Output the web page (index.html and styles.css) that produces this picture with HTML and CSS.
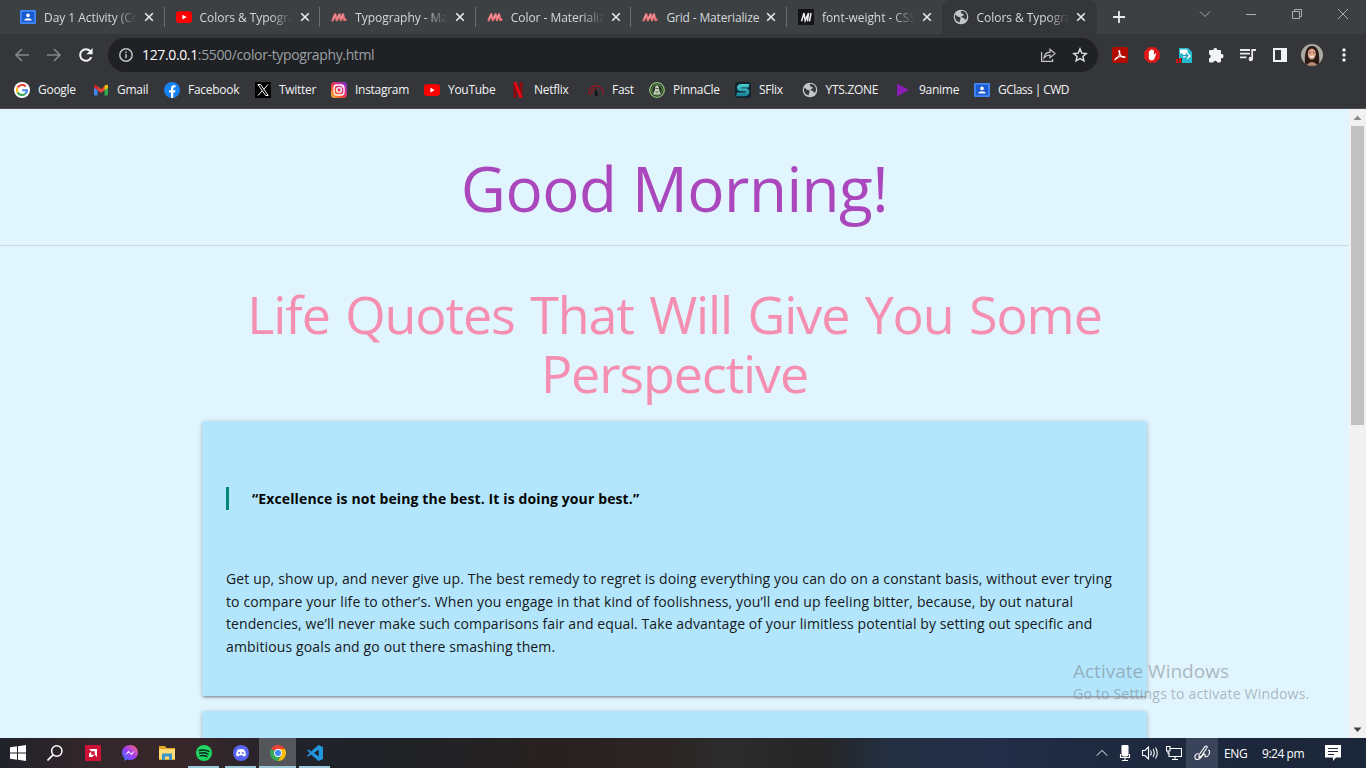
FILE: index.html
```html
<!DOCTYPE html>
<html lang="en">
<head>
<meta charset="utf-8">
<title>Colors &amp; Typography</title>
<link rel="stylesheet" href="styles.css">
</head>
<body>
<svg width="0" height="0" class="defs">
  <defs>
    <linearGradient id="ig" x1="0" y1="1" x2="1" y2="0"><stop offset="0" stop-color="#fdc735"/><stop offset=".35" stop-color="#f5502f"/><stop offset=".65" stop-color="#d42a8c"/><stop offset="1" stop-color="#6a35d8"/></linearGradient>
    <linearGradient id="ms" x1="0" y1="1" x2="1" y2="0"><stop offset="0" stop-color="#2b7cff"/><stop offset=".5" stop-color="#a13cf5"/><stop offset="1" stop-color="#ff6a68"/></linearGradient>
    <linearGradient id="sf" x1="0" y1="0" x2="0" y2="1"><stop offset="0" stop-color="#45cfd0"/><stop offset="1" stop-color="#1b7f95"/></linearGradient>
    <symbol id="x" viewBox="0 0 10 10"><path d="M1.2 1.2l7.6 7.6M8.8 1.2L1.2 8.8" stroke="#e8eaed" stroke-width="1.6" fill="none"/></symbol>
    <symbol id="classroom" viewBox="0 0 16 16"><rect y="1" width="16" height="14" rx="1" fill="#4285f4"/><rect x="1.8" y="2.8" width="12.4" height="10.4" fill="#1a5bd0"/><circle cx="8" cy="6.4" r="1.8" fill="#fff"/><path d="M4.3 11.4c0-3 7.4-3 7.4 0z" fill="#fff"/></symbol>
    <symbol id="youtube" viewBox="0 0 16 16"><rect y="2.3" width="16" height="11.6" rx="3" fill="#f00"/><path d="M6.4 5.700v4.700L10.600 8z" fill="#fff"/></symbol>
    <symbol id="materialize" viewBox="0 0 16 16"><path d="M1.600 11.400L4.300 5.300 5.800 11.200 8.600 5.300 9.900 11.200 12 5.300 13.400 11 14.600 10.600" fill="none" stroke="#e8747a" stroke-width="2.300" stroke-linecap="round" stroke-linejoin="round"/><path d="M2.200 9.800l1.900-4.300M6.500 9.600l1.900-4M10.400 9.400l1.500-3.800" stroke="#f7b0b3" stroke-width=".9" fill="none"/></symbol>
    <symbol id="globe" viewBox="0 0 16 16"><circle cx="8" cy="8" r="7.300" fill="#c3c6ca"/><path d="M2.300 5.600c1.400.6 2.100 2.400 3.900 2.500 1.100.1 1.500.9 1.300 1.900-.2.900-.9 1.300-.7 3.500C4 13 2 10.700 1.900 8zM7.300 2.100c1.500.5.3 1.600 1.100 2.400.7.600 2-.2 2.300.9.200 1-.9 1.500-1.800 1.700-.8.300-.4 1.200.5 1.300 1.300 0 2.400 1 2.600 2.300l1.500-.8c1-2.300.5-5-1.300-6.600-1.300-1.100-3-1.600-4.900-1.200z" fill="#36373a"/></symbol>
  </defs>
</svg>

<header class="tabs">
  <div class="tab"><svg class="fav"><use href="#classroom"/></svg><span class="title">Day 1 Activity (Color</span><svg class="close"><use href="#x"/></svg></div>
  <div class="tab"><svg class="fav"><use href="#youtube"/></svg><span class="title">Colors &amp; Typography</span><svg class="close"><use href="#x"/></svg></div>
  <div class="tab"><svg class="fav"><use href="#materialize"/></svg><span class="title">Typography - Materialize</span><svg class="close"><use href="#x"/></svg></div>
  <div class="tab"><svg class="fav"><use href="#materialize"/></svg><span class="title">Color - Materialize</span><svg class="close"><use href="#x"/></svg></div>
  <div class="tab"><svg class="fav"><use href="#materialize"/></svg><span class="title full">Grid - Materialize</span><svg class="close"><use href="#x"/></svg></div>
  <div class="tab last"><svg class="fav" viewBox="0 0 16 16"><rect width="16" height="16" fill="#15141a"/><path d="M3.500 12.300L6 4l1.200 7.500L10.500 4 9.500 12.300M11.500 12.300L13 4" fill="none" stroke="#eee" stroke-width="1.500"/></svg><span class="title">font-weight - CSS: Casc</span><svg class="close"><use href="#x"/></svg></div>
  <div class="tab active"><svg class="fav"><use href="#globe"/></svg><span class="title">Colors &amp; Typography</span><svg class="close"><use href="#x"/></svg></div>
  <svg class="plus" viewBox="0 0 12 12"><path d="M6 0v12M0 6h12" stroke="#e8eaed" stroke-width="1.800"/></svg>
  <div class="window-buttons">
    <svg viewBox="0 0 12 12"><path d="M1 3.500l5 5 5-5" /></svg>
    <svg viewBox="0 0 12 12"><path d="M1 6.500h10"/></svg>
    <svg viewBox="0 0 12 12"><path d="M1.500 3.500h7v7h-7zM3.500 3.500v-2h7v7h-2"/></svg>
    <svg viewBox="0 0 12 12"><path d="M1 1l10 10M11 1L1 11"/></svg>
  </div>
</header>

<nav class="toolbar">
  <svg class="nav" viewBox="0 0 16 16"><path d="M15 8H2M8 2L2 8l6 6" stroke="#84878a"/></svg>
  <svg class="nav" viewBox="0 0 16 16"><path d="M1 8h13M8 2l6 6-6 6" stroke="#84878a"/></svg>
  <svg class="nav" viewBox="0 0 16 16"><path d="M13.300 10.200A5.800 5.800 0 1 1 12.400 4.200" stroke="#f1f3f4" stroke-width="2"/><path d="M14.600 1v6.200H8.400z" fill="#f1f3f4"/></svg>
  <div class="omnibox">
    <svg width="16" height="16" viewBox="0 0 16 16" fill="none" stroke="#bdc1c6" stroke-width="1.500"><circle cx="8" cy="8" r="6.200"/><path d="M8 7v4.200M8 4.400v1.600"/></svg>
    <span class="url"><b>127.0.0.1</b>:5500/color-typography.html</span>
    <svg class="share" width="16" height="16" viewBox="0 0 16 16" fill="none" stroke="#c4c7c5" stroke-width="1.200"><path d="M1.600 5v9.400h11V12M4 11c.4-3.800 2.500-5.700 6-5.900V2.300L15 6.600l-5 4.200V8c-2.700 0-4.400.8-6 3z"/></svg>
    <svg width="16" height="16" viewBox="0 0 16 16" fill="none" stroke="#dfe1e5" stroke-width="1.400"><path d="M8 1.900l1.800 4.200 4.500.4-3.400 3 1 4.400L8 11.600l-3.900 2.300 1-4.400-3.400-3 4.500-.4z"/></svg>
  </div>
  <div class="extensions">
    <svg viewBox="0 0 16 16"><rect width="16" height="16" rx="2" fill="#b30b00"/><path d="M3 12.500C6 11.500 8.500 7 7.700 4c-.8-1.500-1.200.5-.2 2.500 1.200 2.300 3.200 4 5 4 1.700-.4-.5-1.500-4-.8-2.500.3-5 1.500-5.500 2.800z" fill="none" stroke="#fff" stroke-width="1.100"/></svg>
    <svg viewBox="0 0 16 16"><path d="M4.800.2h6.400l4.600 4.600v6.400l-4.600 4.600H4.800L.2 11.200V4.800z" fill="#e01818"/><path d="M4.800 8V4.600c0-.9 1.200-.9 1.200 0V3.500c0-1 1.300-1 1.300 0V2.900c0-1 1.300-1 1.300 0v.8c0-1 1.300-1 1.300 0V8.200l1-1.500c.6-.8 1.600-.3 1.200.6l-1.600 4c-.6 1.600-1.200 2-2.900 2-2 0-2.800-.9-2.800-2.800z" fill="#fff"/></svg>
    <svg viewBox="0 0 16 16"><path d="M3 1h9l4 4v11H6V11H3z" fill="#24b9cd"/><path d="M4 2.500h7.500v3L15 9l-4 3.500v-2H7v-4H4z" fill="#fff"/><path d="M6.500 8.700H12M9.800 6.500L12 8.700l-2.200 2.200" stroke="#14a0b8" stroke-width="1.200" fill="none"/><path d="M0 12h2v4H0zM3 11h2v5H3z" fill="#d11"/></svg>
    <svg viewBox="0 0 16 16"><path d="M1 4.300c0-.7.500-1.200 1.200-1.200h3.100a2 2 0 1 1 4 0h2.500c.7 0 1.200.5 1.200 1.200v2.800a2.100 2.100 0 1 1 0 4.100v3c0 .7-.5 1.200-1.200 1.200H9.300a2.100 2.100 0 0 0-4.100 0h-3c-.7 0-1.200-.5-1.200-1.200v-2.700a2.200 2.200 0 0 0 0-4.300z" fill="#f1f3f4"/></svg>
    <svg viewBox="0 0 16 16"><path d="M0 3h10M0 6.700h10M0 10.400h6.500M12.200 12V3H16" stroke="#e8eaed" stroke-width="1.800" fill="none"/><circle cx="10.800" cy="12" r="2.200" fill="#e8eaed"/></svg>
    <svg viewBox="0 0 16 16"><path d="M1 1h14v14H1zM3 3v10h6V3z" fill="#f1f3f4" fill-rule="evenodd"/></svg>
    <svg class="avatar" viewBox="0 0 22 22"><clipPath id="round"><circle cx="11" cy="11" r="11"/></clipPath><g clip-path="url(#round)"><rect width="22" height="22" fill="#a9aaa0"/><path d="M4 22C3 9 5 2 11 2s8 6 7 20z" fill="#2c1a17"/><ellipse cx="10.800" cy="10" rx="4" ry="5.600" fill="#dba387"/><path d="M8.300 11.800q2.500 3.400 5 0z" fill="#fff"/><path d="M8 8.700h1.800M12 8.700h1.800" stroke="#5d3b33" stroke-width=".8"/><path d="M5 22q6-8 12 0z" fill="#b98a78"/></g></svg>
    <svg class="dots" viewBox="0 0 4 16" fill="#f1f3f4"><circle cx="2" cy="3" r="1.700"/><circle cx="2" cy="8" r="1.700"/><circle cx="2" cy="13" r="1.700"/></svg>
  </div>
</nav>

<nav class="bookmarks">
  <a><svg viewBox="0 0 16 16"><circle cx="8" cy="8" r="8" fill="#fff"/><g fill="none" stroke-width="2.100"><path d="M11.700 4.500A5 5 0 0 0 3.600 5.600" stroke="#ea4335"/><path d="M3.600 5.600a5 5 0 0 0 0 4.800" stroke="#fbbc05"/><path d="M3.600 10.400a5 5 0 0 0 7.700 1.300" stroke="#34a853"/><path d="M11.300 11.700A5 5 0 0 0 13 8.200H8.200" stroke="#4285f4"/></g></svg><span>Google</span></a>
  <a><svg viewBox="0 0 16 16"><path d="M1 3.500l3.500 2.400V13.500H2a1 1 0 0 1-1-1z" fill="#4285f4"/><path d="M15 3.500l-3.500 2.400V13.500H14a1 1 0 0 0 1-1z" fill="#34a853"/><path d="M4.500 4.200L8 7l3.500-2.800v4L8 11 4.500 8.200z" fill="#ea4335"/><path d="M1 4.500C1 2.500 2.800 2.200 4 3.300l.5.500v4.400L1 5.700z" fill="#c5221f"/><path d="M15 4.500c0-2-1.800-2.300-3-1.200l-.5.500v4.400L15 5.700z" fill="#fbbc04"/></svg><span>Gmail</span></a>
  <a><svg viewBox="0 0 16 16"><circle cx="8" cy="8" r="8" fill="#1582ef"/><path d="M7 16v-5.500H5V8.200h2V6.500C7 4.300 8.300 3.200 10 3.200l1.600.1v2h-1c-1 0-1.300.5-1.300 1.300v1.600h2.200l-.4 2.300H9.300V16z" fill="#fff"/></svg><span>Facebook</span></a>
  <a><svg viewBox="0 0 16 16"><rect width="16" height="16" fill="#000"/><path d="M3 2.500h2.600l7.600 11h-2.600zM13 2.500L8.700 7.300M7.200 8.800L3 13.500" fill="none" stroke="#fff"/></svg><span>Twitter</span></a>
  <a><svg viewBox="0 0 16 16"><rect width="16" height="16" rx="3.500" fill="url(#ig)"/><g fill="none" stroke="#fff" stroke-width="1.300"><rect x="3" y="3" width="10" height="10" rx="3"/><circle cx="8" cy="8" r="2.400"/></g><circle cx="11" cy="5" r=".8" fill="#fff"/></svg><span>Instagram</span></a>
  <a><svg><use href="#youtube"/></svg><span>YouTube</span></a>
  <a><svg viewBox="0 0 16 16"><path d="M3.500 0h3v16h-3zM9.500 0h3v16h-3z" fill="#8f0a10"/><path d="M3.500 0h3l6 16h-3z" fill="#e50914"/></svg><span>Netflix</span></a>
  <a><svg viewBox="0 0 16 16"><path d="M1.300 12.500A7 7 0 1 1 14.800 12.500M4 12.500A4.300 4.300 0 0 1 9 6.700" fill="none" stroke="#a01622" stroke-width="1.200"/><path d="M7 5l2.400 6.200A1.500 1.500 0 1 1 7 12z" fill="#111"/></svg><span>Fast</span></a>
  <a><svg viewBox="0 0 16 16"><circle cx="8" cy="8" r="7.300" fill="#263523" stroke="#8fbf7c" stroke-width="1.300"/><circle cx="8" cy="8" r="5.300" fill="none" stroke="#61944f"/><path d="M4.500 12.500c0-3 1.500-3 1.500-6 0-4 4-4 4 0 0 3 1.500 3 1.500 6z" fill="#c5cfbe"/><path d="M6.500 6.500h3M6.500 10h3" stroke="#4d6343"/></svg><span>PinnaCle</span></a>
  <a><svg viewBox="0 0 16 16"><rect width="16" height="16" rx="3" fill="#10232f"/><path d="M14.500 2H6C.8 2 .5 9.300 6 9.300h4c1.500 0 1 1.200 0 1.200H2L1 14.200h9c5.500 0 6-7.900.5-7.900H7c-1 0-1-.8 0-.8h6.500z" fill="url(#sf)"/></svg><span>SFlix</span></a>
  <a><svg><use href="#globe"/></svg><span>YTS.ZONE</span></a>
  <a><svg viewBox="0 0 16 16"><path d="M2 1.500L14 8 2 14.500z" fill="#8b1fb5"/></svg><span>9anime</span></a>
  <a class="tight"><svg><use href="#classroom"/></svg><span>GClass | CWD</span></a>
</nav>

<div class="viewport">
  <main class="page">
    <h1>Good Morning!</h1>
    <hr>
    <div class="container">
      <h2>Life Quotes That Will Give You Some<br>Perspective</h2>
      <section class="card">
        <blockquote>“Excellence is not being the best. It is doing your best.”</blockquote>
        <p>Get up, show up, and never give up. The best remedy to regret is doing everything you can do on a constant basis, without ever trying<br>to compare your life to other’s. When you engage in that kind of foolishness, you’ll end up feeling bitter, because, by out natural<br><span class="tighter">tendencies, we’ll never make such comparisons fair and equal. Take advantage of your limitless potential by setting out specific and</span><br>ambitious goals and go out there smashing them.</p>
      </section>
      <section class="card"></section>
    </div>
  </main>
  <div class="scrollbar">
    <svg viewBox="0 0 17 17"><path d="M4.500 11h8L8.500 6.500z" fill="#8b8b8b"/></svg>
    <div class="thumb"></div>
    <svg viewBox="0 0 17 17"><path d="M4.500 6.500h8L8.500 11z" fill="#404040"/></svg>
  </div>
  <div class="activate"><div class="big">Activate Windows</div><div class="small">Go to Settings to activate Windows.</div></div>
</div>

<footer class="taskbar">
  <div class="app"><svg viewBox="0 0 16 16"><path d="M0 2.300l7-1v6.200H0zM8 1.200L16 0v7.500H8zM0 8.500h7v6.200l-7-1zM8 8.500h8V16l-8-1.200z" fill="#fff"/></svg></div>
  <div class="app"><svg viewBox="0 0 16 16"><circle cx="9.800" cy="6" r="5.200" fill="none" stroke="#fff" stroke-width="1.500"/><path d="M6 9.800L.4 15.500" stroke="#fff" stroke-width="1.700"/></svg></div>
  <div class="app"><svg viewBox="0 0 16 16"><rect width="16" height="16" fill="#cc1236"/><path d="M4 4h8v8L9.700 9.700V6.300H6.300zM4 8.700L6.200 6.500v3.300h3.300L7.300 12H4z" fill="#fff"/></svg></div>
  <div class="app"><svg viewBox="0 0 16 16"><path d="M8 0C3.400 0 0 3.300 0 7.600c0 2.400 1 4.300 2.500 5.600V16l2.600-1.400c.9.300 1.900.4 2.900.4 4.600 0 8-3.300 8-7.500S12.600 0 8 0z" fill="url(#ms)"/><path d="M3 10l3.500-4.200L9 8.500 13 5.700 9.500 10 7 7.600z" fill="#fff"/></svg></div>
  <div class="app"><svg viewBox="0 0 16 16"><path d="M0 1h6l1.500 2H16v12H0z" fill="#e5a626"/><path d="M0 4h16v10H0z" fill="#ffdc75"/><path d="M3 15V8.500h10V15h-3v-3.500H6V15z" fill="#3996ce"/></svg></div>
  <div class="app open"><svg viewBox="0 0 16 16"><circle cx="8" cy="8" r="8" fill="#1ed760"/><path d="M3.300 5.500q5-1.500 9.600.9M3.700 8.300q4.500-1.300 8.200.8M4.200 10.900q3.700-1 6.700.7" stroke="#122" stroke-width="1.500" stroke-linecap="round" fill="none"/></svg></div>
  <div class="app open"><svg viewBox="0 0 16 16"><circle cx="8" cy="8" r="8" fill="#5865f2"/><path d="M4.800 4.500q3.200-1.200 6.400 0 1.800 2.800 1.800 5.800-1.200 1-2.600 1.200l-.8-1.200H6.400l-.8 1.200Q4.200 11.300 3 10.300q0-3 1.800-5.800z" fill="#fff"/><circle cx="6.200" cy="8" r="1" fill="#5865f2"/><circle cx="9.800" cy="8" r="1" fill="#5865f2"/></svg></div>
  <div class="app open current"><svg viewBox="0 0 16 16"><path d="M8 8L1.070 4A8 8 0 0 1 14.930 4z" fill="#ea4335"/><path d="M1.070 4A8 8 0 0 0 8 16l3.500-6L8 8z" fill="#34a853"/><path d="M14.930 4A8 8 0 0 1 8 16l3.500-6L8 4z" fill="#fbbc05"/><circle cx="8" cy="8" r="3.900" fill="#fff"/><circle cx="8" cy="8" r="3" fill="#4285f4"/></svg></div>
  <div class="app open"><svg viewBox="0 0 16 16"><path d="M11.500 0L16 2v12l-4.500 2L4 9.500 1.500 11.500 0 10.700 3 8 0 5.300l1.500-.8L4 6.500zM11.700 4.500L7 8l4.700 3.500z" fill="#2496e0" fill-rule="evenodd"/></svg></div>
  <div class="tray">
    <svg class="chev" viewBox="0 0 16 16"><path d="M2 11l6-6 6 6"/></svg>
    <svg class="mic" viewBox="0 0 16 16"><rect x="5" y="0" width="6" height="11" rx="1.500" fill="#fff"/><path d="M3.500 9v3.500h9V9M8 12.500v3M5 15.500h6"/></svg>
    <svg class="vol" viewBox="0 0 16 16"><path d="M.5 5.500H3L6.500 2v12L3 10.500H.5zM8.500 5.500q1.500 2.500 0 5M11 4q2.500 4 0 8M13.500 2.500q3.500 5.500 0 11"/></svg>
    <svg class="net" viewBox="0 0 16 16"><path d="M4 3.500H15.500v8H3V7.500M6 14.500h6M9 11.500v3M.5 1.500h3.500V6H.5zM2 6v3"/></svg>
    <div class="pen"><svg viewBox="0 0 16 16"><path d="M5 10L11 1.500q2-1.300 2.300.5L7.500 11 5 12.500zM4.500 8.500q-5 1-3 5.500 3 1.500 5.500-1.500l2.500-3q2-1 1.500 1t2 1 2.500-4-1.500-2"/></svg></div>
    <span class="lang">ENG</span>
    <span class="time">9:24 pm</span>
    <svg class="note" viewBox="0 0 16 16"><path d="M0 0h16v12.500h-5L8 16V12.500H0z" fill="#fff" stroke="none"/><path d="M3 3.500h10M3 6.500h10M3 9.500h6" stroke="#202a3d"/></svg>
  </div>
</footer>
</body>
</html>
```
FILE: styles.css
```css
* { box-sizing: border-box; }
body {
  margin: 0;
  width: 1366px;
  height: 768px;
  overflow: hidden;
  display: flex;
  flex-direction: column;
  font-family: "Open Sans", "Noto Sans", sans-serif;
  background: #35363a;
}
svg { display: block; flex: none; }
.defs { position: absolute; }

/* tab strip */
.tabs { height: 34px; background: #3c4043; display: flex; padding-left: 9px; flex: none; }
.tab {
  width: 155.600px;
  height: 34px;
  display: flex;
  align-items: center;
  padding: 0 10px 0 11px;
  position: relative;
  flex: none;
}
.tab::after { content: ""; position: absolute; right: 0; top: 7px; width: 1px; height: 20px; background: #6b6f73; }
.tab.last::after, .tab.active::after { display: none; }
.fav { width: 16px; height: 16px; margin-right: 8px; }
.title {
  width: 95px;
  overflow: hidden;
  white-space: nowrap;
  font-size: 12px;
  letter-spacing: -0.050px;
  color: #d5d8dc;
  -webkit-mask-image: linear-gradient(90deg, #000 74%, transparent 98%);
}
.title.full { -webkit-mask-image: none; letter-spacing: -0.150px; }
.close { width: 10px; height: 10px; margin-left: 5px; }
.tab.active { background: #35363a; border-radius: 8px 8px 0 0; margin-left: -1px; }
.tab.active .close { margin-left: 4px; }
.plus { width: 12px; height: 12px; margin: 11px 0 0 16px; }
.window-buttons { margin-left: auto; display: flex; gap: 34px; padding: 8px 17px 0 0; }
.window-buttons svg { width: 12px; height: 12px; fill: none; stroke: #b5b8ba; stroke-width: .9; }

/* address bar */
.toolbar { height: 38px; display: flex; align-items: center; padding: 4px 0 0 14px; flex: none; }
.nav { width: 16px; height: 16px; fill: none; stroke-width: 1.600; margin-right: 16px; }
.omnibox {
  width: 990px;
  height: 34px;
  margin-left: -2px;
  border-radius: 17px;
  background: #202124;
  display: flex;
  align-items: center;
  padding: 0 10px;
  flex: none;
}
.url { font-size: 14px; color: #9aa0a6; margin-left: 8px; letter-spacing: -0.360px; white-space: nowrap; padding-bottom: 1px; }
.url b { font-weight: 400; color: #fff; }
.share { margin-left: auto; margin-right: 16px; }
.extensions { display: flex; align-items: center; gap: 16px; margin-left: 14px; }
.extensions svg { width: 16px; height: 16px; }
.extensions .avatar { width: 22px; height: 22px; margin: 0 -3px; }
.extensions .dots { width: 4px; margin-left: 6px; }

/* bookmarks */
.bookmarks {
  height: 37px;
  border-bottom: 1px solid #4b4d51;
  display: grid;
  grid-template-columns: 79px 71px 91px 76px 93px 86px 78px 61px 86px 66.500px 93.500px 79px 110px;
  padding-left: 14px;
  align-items: center;
  flex: none;
}
.bookmarks a { display: flex; align-items: center; gap: 8px; font-size: 12px; color: #f1f3f4; white-space: nowrap; letter-spacing: -0.280px; }
.bookmarks .tight { letter-spacing: -0.550px; }
.bookmarks span { padding-bottom: 1px; }
.bookmarks svg { width: 16px; height: 16px; }

/* page */
.viewport { height: 629px; display: flex; position: relative; overflow: hidden; flex: none; }
.page { width: 1349px; background: #e1f5fe; font-size: 15px; line-height: 22.500px; overflow: hidden; }
h1, h2 { font-weight: 400; text-align: center; white-space: nowrap; }
h1 { font-size: 62px; line-height: 69px; margin: 0; padding: 45px 0 22px; color: #ab47bc; letter-spacing: -0.500px; }
hr { margin: 0; border: 0; height: 1px; background: #cddbdf; }
.container { width: 945px; margin: 0 auto; }
h2 { font-size: 52px; line-height: 59px; margin: 38px 0 19px; color: #f48fb1; letter-spacing: -1.100px; word-spacing: 3px; }
.card {
  height: 275px;
  margin-bottom: 15px;
  padding: 66px 24px 0;
  border-radius: 2px;
  background: #b3e5fc;
  box-shadow: 0 2px 2px 0 rgba(0,0,0,.14), 0 3px 1px -2px rgba(0,0,0,.12), 0 1px 5px 0 rgba(0,0,0,.2);
}
blockquote { margin: 0 0 57px; border-left: 3px solid #00897b; padding: 1px 0 0 23px; height: 23px; font-weight: 700; color: #050505; font-size: 14px; letter-spacing: 0.120px; }
.card p { margin: 0; padding-top: 1px; font-size: 14px; letter-spacing: 0.134px; white-space: nowrap; color: #15191b; }
.tighter { letter-spacing: 0.090px; }

.scrollbar { width: 17px; background: #f1f1f1; display: flex; flex-direction: column; }
.scrollbar svg { width: 17px; height: 17px; }
.thumb { width: 13px; height: 299px; margin: 0 auto auto; background: #c1c1c1; }
.activate { position: absolute; left: 1073px; top: 549px; color: rgba(120,130,135,.55); white-space: nowrap; }
.big { font-size: 19px; line-height: 26px; }
.small { font-size: 14px; line-height: 20px; letter-spacing: 0.200px; }

/* taskbar */
.taskbar {
  height: 30px;
  display: flex;
  background: linear-gradient(90deg, #20222a 0, #33262a 90px, #37272a 190px, #21232b 300px, #212226 420px, #29211f 560px, #2b2524 670px, #2c2c2d 730px, #252525 820px, #232f42 890px, #222e48 1000px, #1e2a40 1080px, #1c2639 1366px);
  flex: none;
}
.app { width: 37px; display: flex; align-items: center; justify-content: center; border-bottom: 2px solid transparent; padding-top: 2px; }
.app:first-child { width: 36px; }
.app:nth-child(3) { margin-left: 1px; }
.app svg { width: 16px; height: 16px; }
.app.open { border-image: linear-gradient(90deg, transparent 12%, #9cc9da 12%, #9cc9da 88%, transparent 88%) 2; }
.app.current { background: #54565b; border-image: none; border-bottom-color: #9cc9da; }
.tray { margin-left: auto; display: flex; align-items: center; color: #fff; font-size: 12px; white-space: nowrap; }
.tray svg { width: 16px; height: 16px; fill: none; stroke: #fff; stroke-width: 1.100; }
.tray .chev { width: 14px; height: 14px; margin-right: 8px; }
.tray .mic { margin-right: 9px; }
.tray .vol { margin-right: 8px; }
.tray .net { margin-right: 4px; }
.pen { width: 32px; height: 30px; background: #39435a; display: flex; align-items: center; justify-content: center; }
.lang { width: 38px; margin-left: 6px; letter-spacing: -0.300px; }
.time { width: 63px; letter-spacing: -0.450px; }
.tray .note { margin-right: 25px; }
```
